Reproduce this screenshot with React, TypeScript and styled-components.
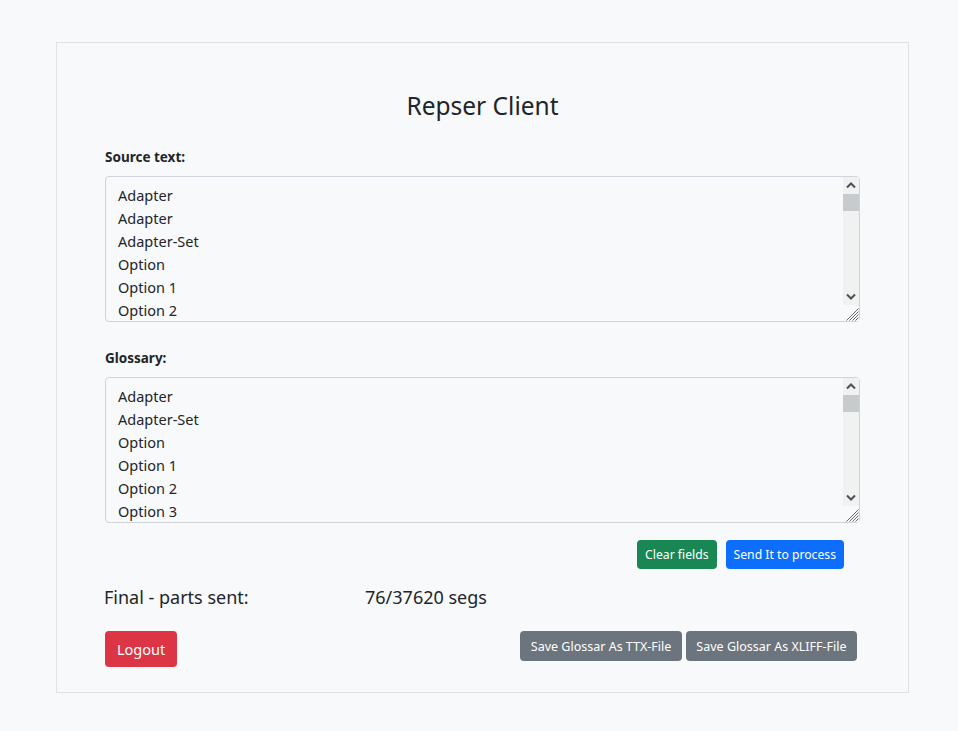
import React from "react";
import styled, { createGlobalStyle } from "styled-components";

const GlobalStyle = createGlobalStyle`
  html, body {
    margin: 0;
    padding: 0;
    background: #f8f9fa;
    color: #212529;
    font-family: "Noto Sans", "Liberation Sans", sans-serif;
  }
  * { box-sizing: border-box; }
`;

const COLORS = {
  text: "#212529",
  border: "#dee2e6",
  green: "#198754",
  blue: "#0d6efd",
  red: "#dc3545",
  gray: "#6c757d",
};

const Card = styled.div`
  margin: 42px 0 0 56px;
  width: 853px;
  height: 651px;
  border: 1px solid ${COLORS.border};
  padding: 48px 48px 0 48px;
  display: flex;
  flex-direction: column;
`;

const Title = styled.h1`
  margin: 0 0 27px;
  text-align: center;
  font-size: 24.5px;
  font-weight: 400;
  line-height: 29px;
`;

const Label = styled.label`
  display: block;
  font-size: 13.5px;
  font-weight: 700;
  line-height: 20px;
  margin-bottom: 9px;
`;

const Field = styled.div<{ $gap: number }>`
  margin-bottom: ${(p) => p.$gap}px;
`;

const TextBox = styled.div`
  position: relative;
  width: 755px;
  height: 146px;
`;

const TextArea = styled.textarea`
  display: block;
  width: 100%;
  height: 100%;
  padding: 7px 30px 7px 12px;
  border: 1px solid #ced4da;
  border-radius: 4px;
  background: #f8f9fa;
  color: ${COLORS.text};
  font-family: inherit;
  font-size: 14.5px;
  line-height: 23px;
  overflow: hidden;
  resize: none;
  outline: none;
`;

/* drawn scrollbar lying over the textarea's right edge */
const ScrollBar = styled.div`
  position: absolute;
  top: 1px;
  right: 1px;
  bottom: 1px;
  width: 16px;
  display: flex;
  flex-direction: column;
  pointer-events: none;
`;

const ScrollButton = styled.div`
  height: 17px;
  background: #f0f1f1;
  display: flex;
  align-items: center;
  justify-content: center;
`;

const Track = styled.div`
  flex: 1;
  background: #f0f1f1;
`;

const Thumb = styled.div<{ $size: number }>`
  height: ${(p) => p.$size}px;
  background: #c8cbce;
`;

const Corner = styled.div`
  height: 16px;
  background: #f8f9fa;
  display: flex;
  align-items: flex-end;
  justify-content: flex-end;
`;

const Chevron = ({ up }: { up?: boolean }) => (
  <svg width="10" height="7" viewBox="0 0 10 7">
    <path
      d={up ? "M1 5.5 L5 1.5 L9 5.5" : "M1 1.5 L5 5.5 L9 1.5"}
      fill="none"
      stroke="#505050"
      strokeWidth="2"
    />
  </svg>
);

const Grip = () => (
  <svg width="15" height="15" viewBox="0 0 15 15">
    <path
      d="M14.5 2.5 L2.5 14.5 M14.5 5.5 L5.5 14.5 M14.5 8.5 L8.5 14.5 M14.5 11.5 L11.5 14.5"
      stroke="#6b6b6b"
      strokeWidth="1"
    />
  </svg>
);

const ScrollText = ({ value }: { value: string }) => (
  <TextBox>
    <TextArea defaultValue={value} />
    <ScrollBar>
      <ScrollButton>
        <Chevron up />
      </ScrollButton>
      <Track>
        <Thumb $size={17} />
      </Track>
      <ScrollButton>
        <Chevron />
      </ScrollButton>
      <Corner>
        <Grip />
      </Corner>
    </ScrollBar>
  </TextBox>
);

const ActionRow = styled.div`
  display: flex;
  justify-content: flex-end;
  gap: 9px;
  padding-right: 16px;
  margin-bottom: 16px;
`;

const Button = styled.button<{ $color: string; $size?: "sm" | "md" }>`
  border: none;
  border-radius: 4px;
  background: ${(p) => p.$color};
  color: #fff;
  font-family: inherit;
  font-size: ${(p) => (p.$size === "md" ? "14.5px" : "12.2px")};
  height: ${(p) => (p.$size === "md" ? "36px" : "29px")};
  padding: ${(p) => (p.$size === "md" ? "0 12px" : "0 8px")};
  cursor: pointer;
`;

const StatusRow = styled.div`
  display: flex;
  font-size: 18px;
  line-height: 24px;
  margin-left: -1px;
  margin-bottom: 22px;
`;

const StatusLabel = styled.span`
  width: 261px;
`;

const FooterRow = styled.div`
  display: flex;
  justify-content: space-between;
  align-items: flex-start;
  padding-right: 3px;
`;

const SaveGroup = styled.div`
  display: flex;
  gap: 4px;
`;

const SaveButton = styled(Button)`
  height: 30px;
  font-size: 12.5px;
  padding: 0 10.5px;
`;

const sourceLines = [
  "Adapter",
  "Adapter",
  "Adapter-Set",
  "Option",
  ...Array.from({ length: 30 }, (_, i) => `Option ${i + 1}`),
].join("\n");

const glossaryLines = [
  "Adapter",
  "Adapter-Set",
  "Option",
  ...Array.from({ length: 31 }, (_, i) => `Option ${i + 1}`),
].join("\n");

export default function App() {
  return (
    <>
      <GlobalStyle />
      <Card>
        <Title>Repser Client</Title>
        <Field $gap={26}>
          <Label>Source text:</Label>
          <ScrollText value={sourceLines} />
        </Field>
        <Field $gap={17}>
          <Label>Glossary:</Label>
          <ScrollText value={glossaryLines} />
        </Field>
        <ActionRow>
          <Button $color={COLORS.green}>Clear fields</Button>
          <Button $color={COLORS.blue}>Send It to process</Button>
        </ActionRow>
        <StatusRow>
          <StatusLabel>Final - parts sent:</StatusLabel>
          <span>76/37620 segs</span>
        </StatusRow>
        <FooterRow>
          <Button $color={COLORS.red} $size="md">Logout</Button>
          <SaveGroup>
            <SaveButton $color={COLORS.gray}>Save Glossar As TTX-File</SaveButton>
            <SaveButton $color={COLORS.gray}>Save Glossar As XLIFF-File</SaveButton>
          </SaveGroup>
        </FooterRow>
      </Card>
    </>
  );
}
